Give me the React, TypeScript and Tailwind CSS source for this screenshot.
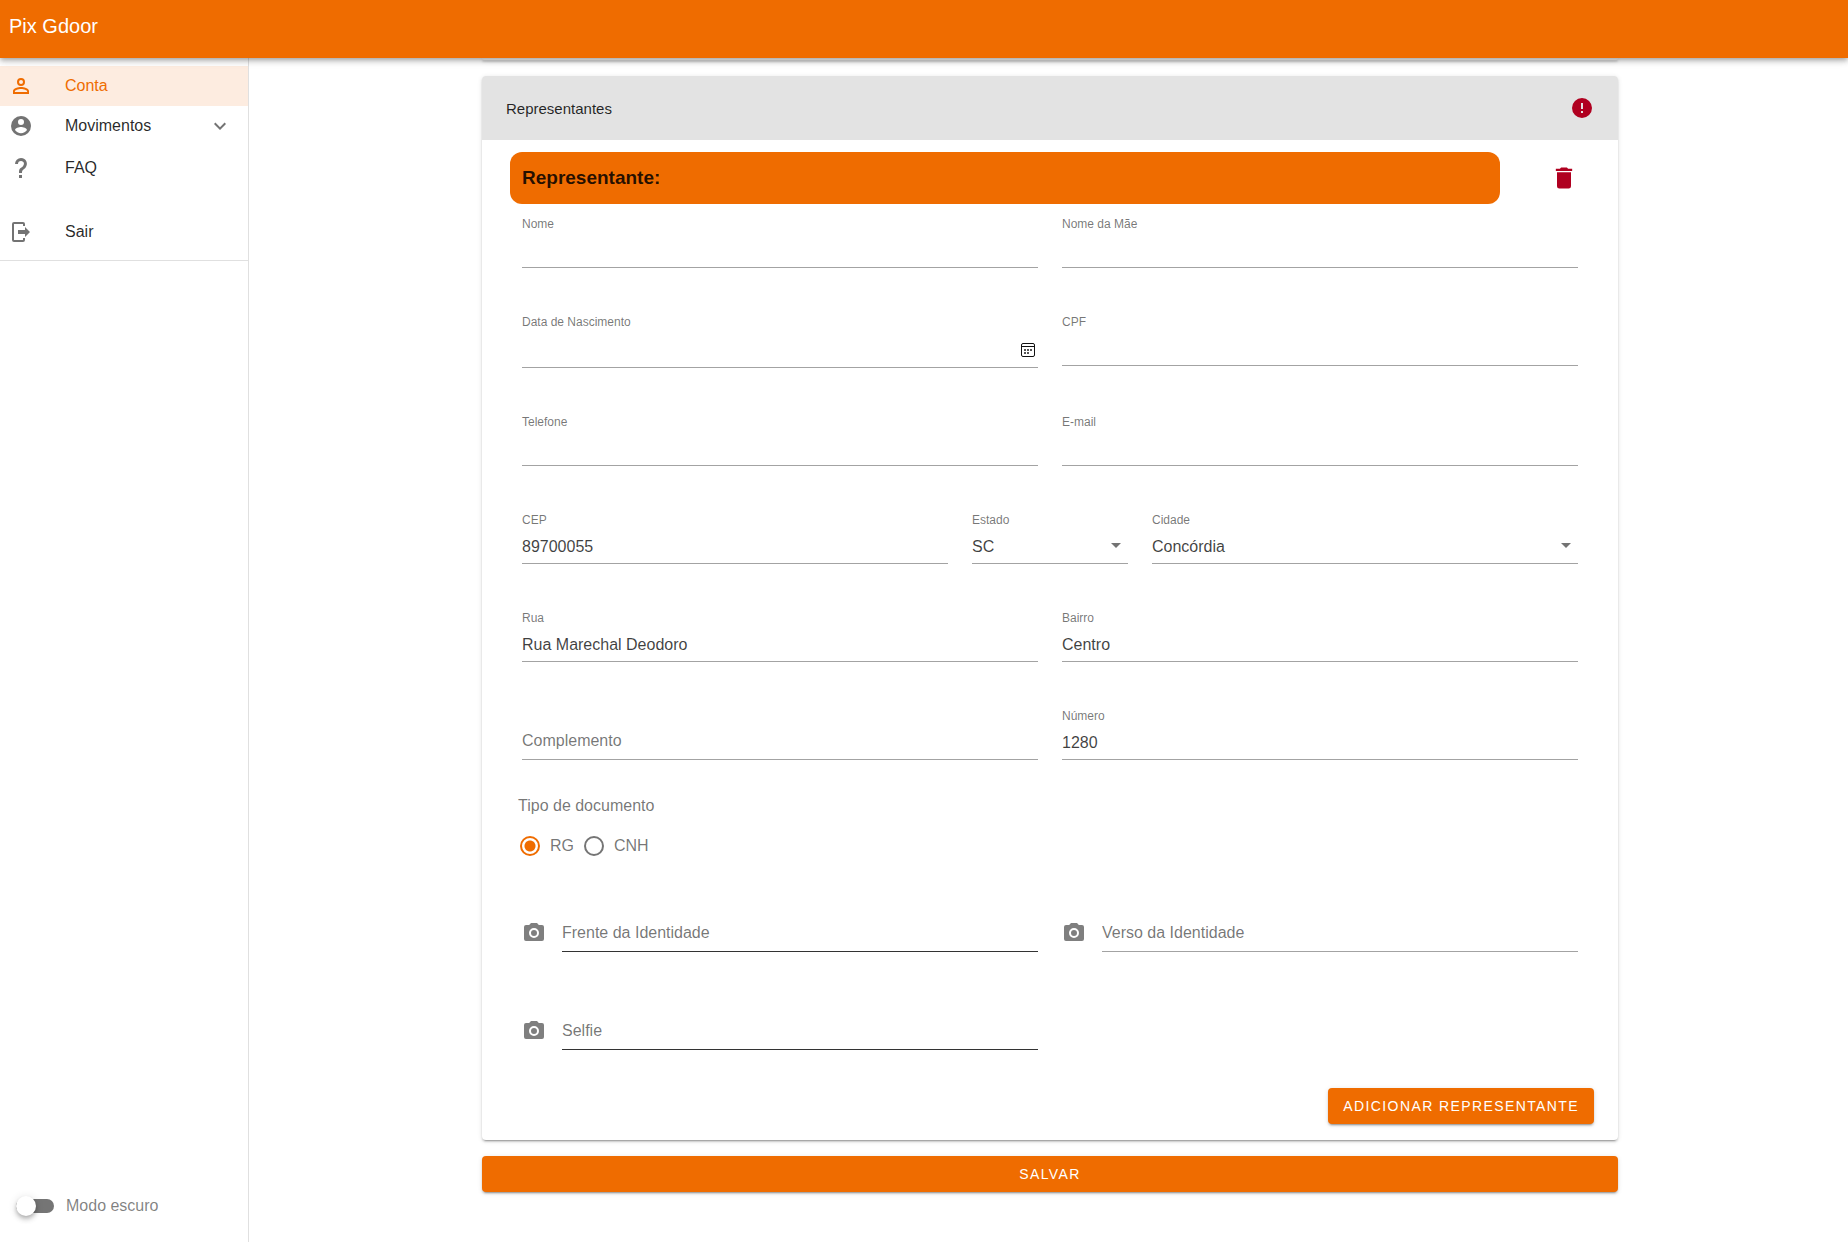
import { useState, type ReactNode } from "react";

const ICONS = {
  account:
    "M12,4A4,4 0 0,1 16,8A4,4 0 0,1 12,12A4,4 0 0,1 8,8A4,4 0 0,1 12,4M12,6A2,2 0 0,0 10,8A2,2 0 0,0 12,10A2,2 0 0,0 14,8A2,2 0 0,0 12,6M12,13C14.67,13 20,14.33 20,17V20H4V17C4,14.33 9.33,13 12,13M12,14.9C9.03,14.9 5.9,16.36 5.9,17V18.1H18.1V17C18.1,16.36 14.97,14.9 12,14.9Z",
  accountCircle:
    "M12,19.2C9.5,19.2 7.29,17.92 6,16C6.03,14 10,12.9 12,12.9C14,12.9 17.97,14 18,16C16.71,17.92 14.5,19.2 12,19.2M12,5A3,3 0 0,1 15,8A3,3 0 0,1 12,11A3,3 0 0,1 9,8A3,3 0 0,1 12,5M12,2A10,10 0 0,0 2,12A10,10 0 0,0 12,22A10,10 0 0,0 22,12C22,6.47 17.5,2 12,2Z",
  help: "M10,19H13V22H10V19M12,2C17.35,2.22 19.68,7.62 16.5,11.67C15.67,12.67 14.33,13.33 13.67,14.17C13,15 13,16 13,17H10C10,15.33 10,13.92 10.67,12.92C11.33,11.92 12.67,11.33 13.5,10.67C15.92,8.43 15.32,5.26 12,5A3,3 0 0,0 9,8H6A6,6 0 0,1 12,2Z",
  exit: "M5,2H14A2,2 0 0,1 16,4V6H14V4H5V20H14V18H16V20A2,2 0 0,1 14,22H5A2,2 0 0,1 3,20V4A2,2 0 0,1 5,2ZM9,10H16V7L21,12L16,17V14H9Z",
  chevronDown: "M7.41,8.58L12,13.17L16.59,8.58L18,10L12,16L6,10L7.41,8.58Z",
  alertCircle:
    "M13,13H11V7H13M13,17H11V15H13M12,2A10,10 0 0,0 2,12A10,10 0 0,0 12,22A10,10 0 0,0 22,12A10,10 0 0,0 12,2Z",
  trash: "M19,4H15.5L14.5,3H9.5L8.5,4H5V6H19M6,19A2,2 0 0,0 8,21H16A2,2 0 0,0 18,19V7H6V19Z",
  camera:
    "M20,4H16.83L15,2H9L7.17,4H4A2,2 0 0,0 2,6V18A2,2 0 0,0 4,20H20A2,2 0 0,0 22,18V6A2,2 0 0,0 20,4M12,17A5,5 0 0,1 7,12A5,5 0 0,1 12,7A5,5 0 0,1 17,12A5,5 0 0,1 12,17M12,9A3,3 0 0,0 9,12A3,3 0 0,0 12,15A3,3 0 0,0 15,12A3,3 0 0,0 12,9Z",
  menuDown: "M7,10L12,15L17,10H7Z",
};

function Icon({ name, className = "size-6" }: { name: keyof typeof ICONS; className?: string }) {
  return (
    <svg viewBox="0 0 24 24" fill="currentColor" aria-hidden="true" className={`shrink-0 ${className}`}>
      <path d={ICONS[name]} />
    </svg>
  );
}

function CalendarIcon() {
  return (
    <svg viewBox="0 0 14 14" className="size-[14px]" aria-hidden="true">
      <rect x="0.5" y="0.5" width="13" height="13" rx="1.5" fill="none" stroke="#111" />
      <path d="M1 3.5H13" stroke="#111" />
      <path d="M3 6h2v2H3zM6 6h2v2H6zM9 6h2v2H9zM3 9h2v2H3zM6 9h2v2H6z" fill="#555" />
    </svg>
  );
}

const ELEVATION =
  "shadow-[0_3px_1px_-2px_rgba(0,0,0,0.2),0_2px_2px_0_rgba(0,0,0,0.14),0_1px_5px_0_rgba(0,0,0,0.12)]";
const CONTROL =
  "block h-9 w-full appearance-none rounded-none border-b border-[#a3a3a3] bg-transparent px-0 pt-[2px] pb-0 text-base text-black/75 outline-none";

type FieldProps = { id: string; label: string; value?: string; className?: string };

function Cell({ className = "col-span-6", children }: { className?: string; children: ReactNode }) {
  return <div className={`px-3 pt-3 pb-[34px] ${className}`}>{children}</div>;
}

function FieldLabel({ id, children }: { id: string; children: ReactNode }) {
  return (
    <label htmlFor={id} className="block text-xs leading-4 text-black/55">
      {children}
    </label>
  );
}

function TextField({ id, label, value = "", className }: FieldProps) {
  return (
    <Cell className={className}>
      <FieldLabel id={id}>{label}</FieldLabel>
      <input id={id} type="text" defaultValue={value} className={CONTROL} />
    </Cell>
  );
}

function DateField({ id, label }: FieldProps) {
  return (
    <Cell>
      <FieldLabel id={id}>{label}</FieldLabel>
      <div className="flex h-[38px] items-center border-b border-[#a3a3a3] pt-[2px] pr-[3px]">
        <input id={id} type="text" className="h-full min-w-0 flex-1 bg-transparent text-base outline-none" />
        <button type="button" aria-label="Abrir calendário">
          <CalendarIcon />
        </button>
      </div>
    </Cell>
  );
}

function SelectField({ id, label, value = "", className }: FieldProps) {
  return (
    <Cell className={className}>
      <FieldLabel id={id}>{label}</FieldLabel>
      <div className="relative">
        <select id={id} defaultValue={value} className={CONTROL}>
          <option>{value}</option>
        </select>
        <span className="pointer-events-none absolute top-[5px] right-0 text-black/55">
          <Icon name="menuDown" />
        </span>
      </div>
    </Cell>
  );
}

function FileField({ id, label, dark = false }: { id: string; label: string; dark?: boolean }) {
  return (
    <Cell>
      <div className="flex h-[52px] gap-4">
        <button type="button" aria-label={`Fotografar ${label}`} className="mt-[21px] h-6 text-black/50">
          <Icon name="camera" />
        </button>
        <input
          id={id}
          type="text"
          aria-label={label}
          placeholder={label}
          className={`min-w-0 flex-1 border-b bg-transparent pt-[14px] text-base outline-none placeholder:text-black/55 ${
            dark ? "border-[#333]" : "border-[#a3a3a3]"
          }`}
        />
      </div>
    </Cell>
  );
}

function RadioOption({ label, checked, onSelect }: { label: string; checked: boolean; onSelect: () => void }) {
  return (
    <label className="flex items-center gap-[10px]">
      <input
        type="radio"
        name="documento"
        checked={checked}
        onChange={onSelect}
        className="size-5 appearance-none rounded-full border-2 border-[#757575] checked:border-[#ef6c00] checked:bg-[radial-gradient(circle,#ef6c00_5px,transparent_6px)]"
      />
      {label}
    </label>
  );
}

function NavItem({
  icon,
  label,
  className = "",
  iconClass = "text-black/55",
  trailing,
}: {
  icon: keyof typeof ICONS;
  label: string;
  className?: string;
  iconClass?: string;
  trailing?: ReactNode;
}) {
  return (
    <a href="#" className={`flex h-10 items-center pr-4 pl-[9px] text-base ${className}`}>
      <span className={iconClass}>
        <Icon name={icon} />
      </span>
      <span className="ml-8 flex-1">{label}</span>
      {trailing}
    </a>
  );
}

function Sidebar() {
  return (
    <aside className="flex w-[249px] shrink-0 flex-col border-r border-[#e0e0e0] bg-white text-black/85">
      <nav className="border-b border-[#e0e0e0] pt-2 pb-2">
        <NavItem icon="account" label="Conta" iconClass="" className="bg-[#fdece0] text-[#ef6c00]" />
        <NavItem
          icon="accountCircle"
          label="Movimentos"
          trailing={
            <span className="text-black/55">
              <Icon name="chevronDown" />
            </span>
          }
        />
        <NavItem icon="help" label="FAQ" className="mt-[2px]" />
        <NavItem icon="exit" label="Sair" className="mt-6" />
      </nav>
      <label className="mt-auto flex h-[72px] items-center gap-3 pl-4 text-base text-black/50">
        <input
          type="checkbox"
          role="switch"
          className="relative h-[14px] w-[38px] appearance-none rounded-full bg-[#757575] before:absolute before:-top-[3px] before:left-0 before:size-5 before:rounded-full before:bg-white before:shadow-[0_2px_4px_-1px_rgba(0,0,0,0.2),0_4px_5px_0_rgba(0,0,0,0.14),0_1px_10px_0_rgba(0,0,0,0.12)] checked:before:left-[18px]"
        />
        Modo escuro
      </label>
    </aside>
  );
}

export default function App() {
  const [documento, setDocumento] = useState("RG");

  return (
    <div className="flex min-h-screen flex-col bg-white font-['Liberation_Sans',Arial,sans-serif]">
      <header className="z-10 h-[58px] bg-[#ef6c00] px-[9px] pt-3 text-white shadow-[0_2px_4px_-1px_rgba(0,0,0,0.2),0_4px_5px_0_rgba(0,0,0,0.14),0_1px_10px_0_rgba(0,0,0,0.12)]">
        <h1 className="text-xl leading-7">Pix Gdoor</h1>
      </header>

      <div className="flex flex-1">
        <Sidebar />

        <main className="min-w-0 flex-1 pl-[3px]">
          <div className="mx-auto flex max-w-[1136px] flex-col gap-4">
            <div className={`h-[2px] rounded-b bg-white ${ELEVATION}`} />

            <section className={`rounded bg-white ${ELEVATION}`}>
              <div className="flex h-16 items-center justify-between rounded-t bg-[#e3e3e3] px-6 text-[#b00020]">
                <h2 className="pt-[2px] text-[15px] text-black/85">Representantes</h2>
                <Icon name="alertCircle" />
              </div>

              <form className="px-7 pt-3">
                <div className="grid grid-cols-12">
                  <h3 className="col-span-11 flex h-[52px] items-center rounded-xl bg-[#ef6c00] px-3 text-[19px] font-bold text-black/85">
                    Representante:
                  </h3>
                  <button
                    type="button"
                    aria-label="Excluir representante"
                    className="mr-3 flex items-center justify-self-end text-[#b00020]"
                  >
                    <Icon name="trash" className="size-7" />
                  </button>

                  <TextField id="nome" label="Nome" className="col-span-6" />
                  <TextField id="mae" label="Nome da Mãe" className="col-span-6" />
                  <DateField id="nascimento" label="Data de Nascimento" />
                  <TextField id="cpf" label="CPF" className="col-span-6" />
                  <TextField id="telefone" label="Telefone" className="col-span-6" />
                  <TextField id="email" label="E-mail" className="col-span-6" />
                  <TextField id="cep" label="CEP" value="89700055" className="col-span-5" />
                  <SelectField id="estado" label="Estado" value="SC" className="col-span-2" />
                  <SelectField id="cidade" label="Cidade" value="Concórdia" className="col-span-5" />
                  <TextField id="rua" label="Rua" value="Rua Marechal Deodoro" className="col-span-6" />
                  <TextField id="bairro" label="Bairro" value="Centro" className="col-span-6" />
                  <Cell>
                    <input
                      type="text"
                      aria-label="Complemento"
                      placeholder="Complemento"
                      className="block h-[52px] w-full border-b border-[#a3a3a3] bg-transparent pt-[14px] text-base outline-none placeholder:text-black/55"
                    />
                  </Cell>
                  <TextField id="numero" label="Número" value="1280" className="col-span-6" />

                  <fieldset className="col-span-12 h-[94px] px-2 text-base text-black/55">
                    <legend className="leading-6">Tipo de documento</legend>
                    <div className="mt-4 flex gap-[10px] pl-[2px]">
                      {["RG", "CNH"].map((tipo) => (
                        <RadioOption
                          key={tipo}
                          label={tipo}
                          checked={documento === tipo}
                          onSelect={() => setDocumento(tipo)}
                        />
                      ))}
                    </div>
                  </fieldset>

                  <FileField id="frente" label="Frente da Identidade" dark />
                  <FileField id="verso" label="Verso da Identidade" />
                  <FileField id="selfie" label="Selfie" dark />
                </div>
              </form>

              <div className="flex justify-end px-6 pt-1 pb-4">
                <button
                  type="button"
                  className={`h-9 rounded bg-[#ef6c00] px-[15px] text-sm tracking-widest text-white uppercase ${ELEVATION}`}
                >
                  Adicionar representante
                </button>
              </div>
            </section>

            <button
              type="button"
              className={`h-9 rounded bg-[#ef6c00] text-sm tracking-widest text-white uppercase ${ELEVATION}`}
            >
              Salvar
            </button>
          </div>
        </main>
      </div>
    </div>
  );
}
